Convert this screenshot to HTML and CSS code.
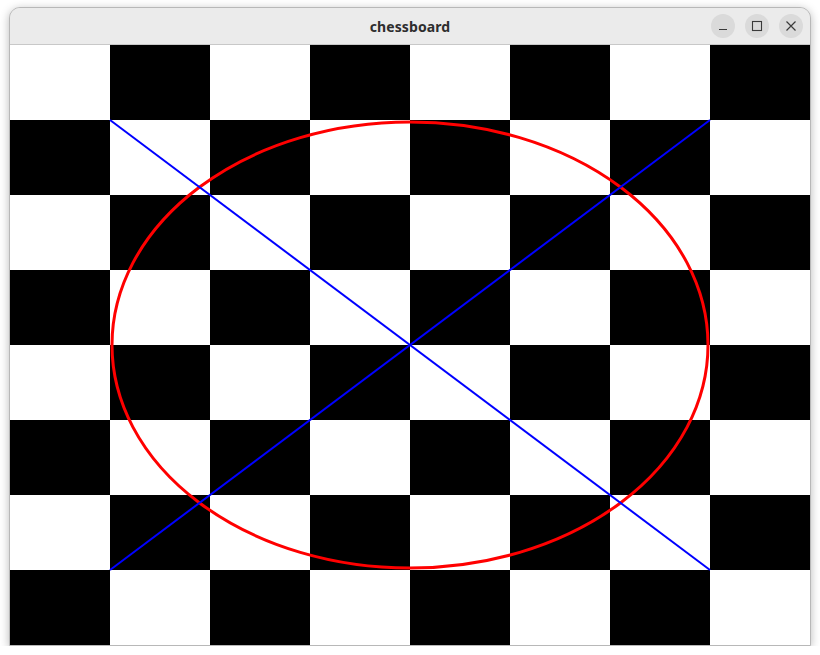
FILE: index.html
```html
<!DOCTYPE html>
<html>
<head>
<meta charset="utf-8">
<title>chessboard</title>
<link rel="stylesheet" href="styles.css">
</head>
<body>
<div class="window">
  <div class="titlebar">
    <div class="title">chessboard</div>
    <div class="controls">
      <span class="btn"><svg width="24" height="24" viewBox="0 0 24 24"><path d="M8 15.5h8" stroke="#3a3a3a" stroke-width="1.2" fill="none"/></svg></span>
      <span class="btn"><svg width="24" height="24" viewBox="0 0 24 24"><rect x="7.5" y="7.5" width="9" height="9" stroke="#3a3a3a" stroke-width="1.1" fill="none"/></svg></span>
      <span class="btn"><svg width="24" height="24" viewBox="0 0 24 24"><path d="M7.5 7.5l9 9M16.5 7.5l-9 9" stroke="#3a3a3a" stroke-width="1.2" fill="none"/></svg></span>
    </div>
  </div>
  <svg class="board" width="800" height="600" viewBox="0 0 800 600">
    <defs>
      <pattern id="chk" width="200" height="150" patternUnits="userSpaceOnUse">
        <rect width="200" height="150" fill="#fff"/>
        <rect x="100" y="0" width="100" height="75" fill="#000"/>
        <rect x="0" y="75" width="100" height="75" fill="#000"/>
      </pattern>
    </defs>
    <rect width="800" height="600" fill="url(#chk)"/>
    <ellipse cx="400" cy="300" rx="298" ry="223" fill="none" stroke="#ff0000" stroke-width="3"/>
    <line x1="100" y1="75" x2="700" y2="525" stroke="#0000ff" stroke-width="2"/>
    <line x1="100" y1="525" x2="700" y2="75" stroke="#0000ff" stroke-width="2"/>
  </svg>
</div>
</body>
</html>
```
FILE: styles.css
```css
html, body {
  margin: 0;
  padding: 0;
  background: #ffffff;
}
body {
  padding: 7px 0 0 9px;
  font-family: "Noto Sans", "Open Sans", sans-serif;
}
.window {
  width: 800px;
  border: 1px solid #b8b8b8;
  border-radius: 11px 11px 0 0;
  background: #ebebeb;
  box-shadow: 0 2px 10px rgba(0,0,0,0.28);
  overflow: hidden;
}
.titlebar {
  position: relative;
  height: 36px;
  border-bottom: 1px solid #c8c8c8;
  background: #ebebeb;
  display: flex;
  align-items: center;
  justify-content: center;
}
.title {
  font-weight: 700;
  font-size: 14px;
  color: #2e2e2e;
  letter-spacing: 0.1px;
}
.controls {
  position: absolute;
  right: 7px;
  top: 6px;
  display: flex;
  gap: 10px;
}
.btn {
  width: 24px;
  height: 24px;
  border-radius: 50%;
  background: #dadada;
  display: block;
}
.btn svg {
  display: block;
}
.board {
  display: block;
}
```
